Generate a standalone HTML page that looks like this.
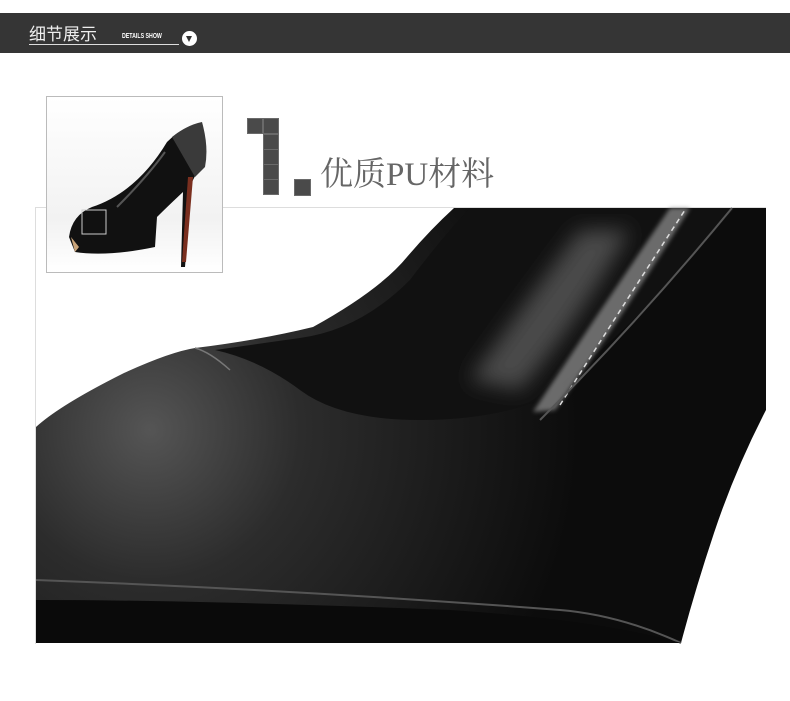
<!DOCTYPE html>
<html><head><meta charset="utf-8"><style>
body{margin:0;width:790px;height:701px;background:#fff;position:relative;overflow:hidden;font-family:"Liberation Serif","Noto Serif CJK SC",serif}
.bar{position:absolute;left:0;top:13px;width:790px;height:40px;background:#353535}
.t{position:absolute;left:29px;top:20px;color:#eee;font-size:17px;font-family:"Liberation Sans","Noto Sans CJK SC",sans-serif}
.ds{position:absolute;left:122px;top:33px;color:#fff;font-size:7px;font-weight:bold;font-family:"Liberation Sans",sans-serif;transform:scaleX(.75);transform-origin:left}
.ul{position:absolute;left:29px;top:44px;width:150px;height:1px;background:#ddd}
.c{position:absolute;left:182px;top:31px;width:15px;height:15px;border-radius:50%;background:#fff}
.c:after{content:"";position:absolute;left:4px;top:5px;border-left:3.5px solid transparent;border-right:3.5px solid transparent;border-top:6px solid #333}
.b{position:absolute;background:#4a4a4a;width:14px;height:14px;outline:1px solid #6a6a6a}
.tt{position:absolute;left:320px;top:148px;font-size:33px;color:#666;letter-spacing:0px}
</style></head><body>
<div class="bar"></div>
<div class="t">细节展示</div><div class="ds">DETAILS SHOW</div><div class="ul"></div><div class="c"></div>
<div style="position:absolute;left:35px;top:207px;width:731px;height:1px;background:#ddd"></div>
<div style="position:absolute;left:35px;top:207px;width:1px;height:437px;background:#ddd"></div>
<svg style="position:absolute;left:0;top:0" width="790" height="701">
<defs>
<radialGradient id="g1" cx="150" cy="430" r="430" gradientUnits="userSpaceOnUse"><stop offset="0" stop-color="#555"/><stop offset=".35" stop-color="#2c2c2c"/><stop offset="1" stop-color="#0c0c0c"/></radialGradient>
<filter id="bl"><feGaussianBlur stdDeviation="10"/></filter>
<filter id="bl2"><feGaussianBlur stdDeviation="2"/></filter>
</defs>
<rect x="36" y="208" width="730" height="435" fill="#fff"/>
<path d="M36 427 Q60 405 124 373 Q170 352 195 348 Q260 340 313 327 Q380 290 407 257 Q430 230 454 208 L766 208 L766 410 Q735 470 714 533 Q695 590 681 643 L36 643Z" fill="url(#g1)"/>
<path d="M215 350 Q260 360 300 390 Q340 420 420 420 Q490 420 540 400 Q620 340 690 260 Q715 230 735 208 L470 208 Q440 240 410 280 Q360 330 300 338 Q250 345 215 350Z" fill="#111"/>
<path d="M470 380 Q520 310 580 230 L630 230 Q580 320 520 390Z" fill="#4a4a4a" filter="url(#bl)"/>
<path d="M533 412 Q600 310 670 208 L690 208 Q620 320 555 410Z" fill="#8a8a8a" opacity=".75" filter="url(#bl2)"/>
<path d="M560 405 Q620 310 685 210" stroke="#ddd" stroke-width="1.5" stroke-dasharray="5 4" fill="none"/>
<path d="M540 420 Q640 320 732 208" stroke="#555" stroke-width="2" fill="none"/>
<path d="M36 580 Q300 590 560 610 Q620 615 681 643" stroke="#555" stroke-width="2" fill="none"/>
<path d="M36 600 L36 643 L681 643 Q600 620 450 610 Q200 600 36 600Z" fill="#0a0a0a"/>
<path d="M195 348 Q210 352 230 370" stroke="#777" stroke-width="1.5" fill="none"/>
</svg>
<div style="position:absolute;left:46px;top:96px;width:175px;height:175px;border:1px solid #bbb;background:linear-gradient(#fff,#f2f2f2 70%,#fff)">
<svg width="175" height="175">
<path d="M22 140 Q25 118 45 110 Q90 95 120 45 Q135 30 150 28 L158 60 Q150 75 145 85 L138 170 L134 170 L136 95 Q120 110 110 120 L108 150 Q60 160 28 155Z" fill="#111"/>
<path d="M125 40 Q140 28 155 25 Q162 50 158 70 L148 80Z" fill="#3a3a3a"/>
<path d="M141 80 L146 80 L139 165 L135 165Z" fill="#7a2f1f"/>
<path d="M70 110 Q100 80 118 55" stroke="#555" stroke-width="2" fill="none"/>
<rect x="35" y="113" width="24" height="24" fill="none" stroke="#ccc" stroke-width="1"/>
<path d="M24 140 L32 150 L28 155Z" fill="#c9a47a"/>
</svg></div>
<div class="b" style="left:248px;top:119px"></div><div class="b" style="left:264px;top:119px"></div>
<div class="b" style="left:264px;top:135px"></div><div class="b" style="left:264px;top:150px"></div><div class="b" style="left:264px;top:165px"></div><div class="b" style="left:264px;top:180px"></div>
<div class="b" style="left:295px;top:180px;width:15px;height:15px"></div>
<div class="tt">优质PU材料</div>
</body></html>
